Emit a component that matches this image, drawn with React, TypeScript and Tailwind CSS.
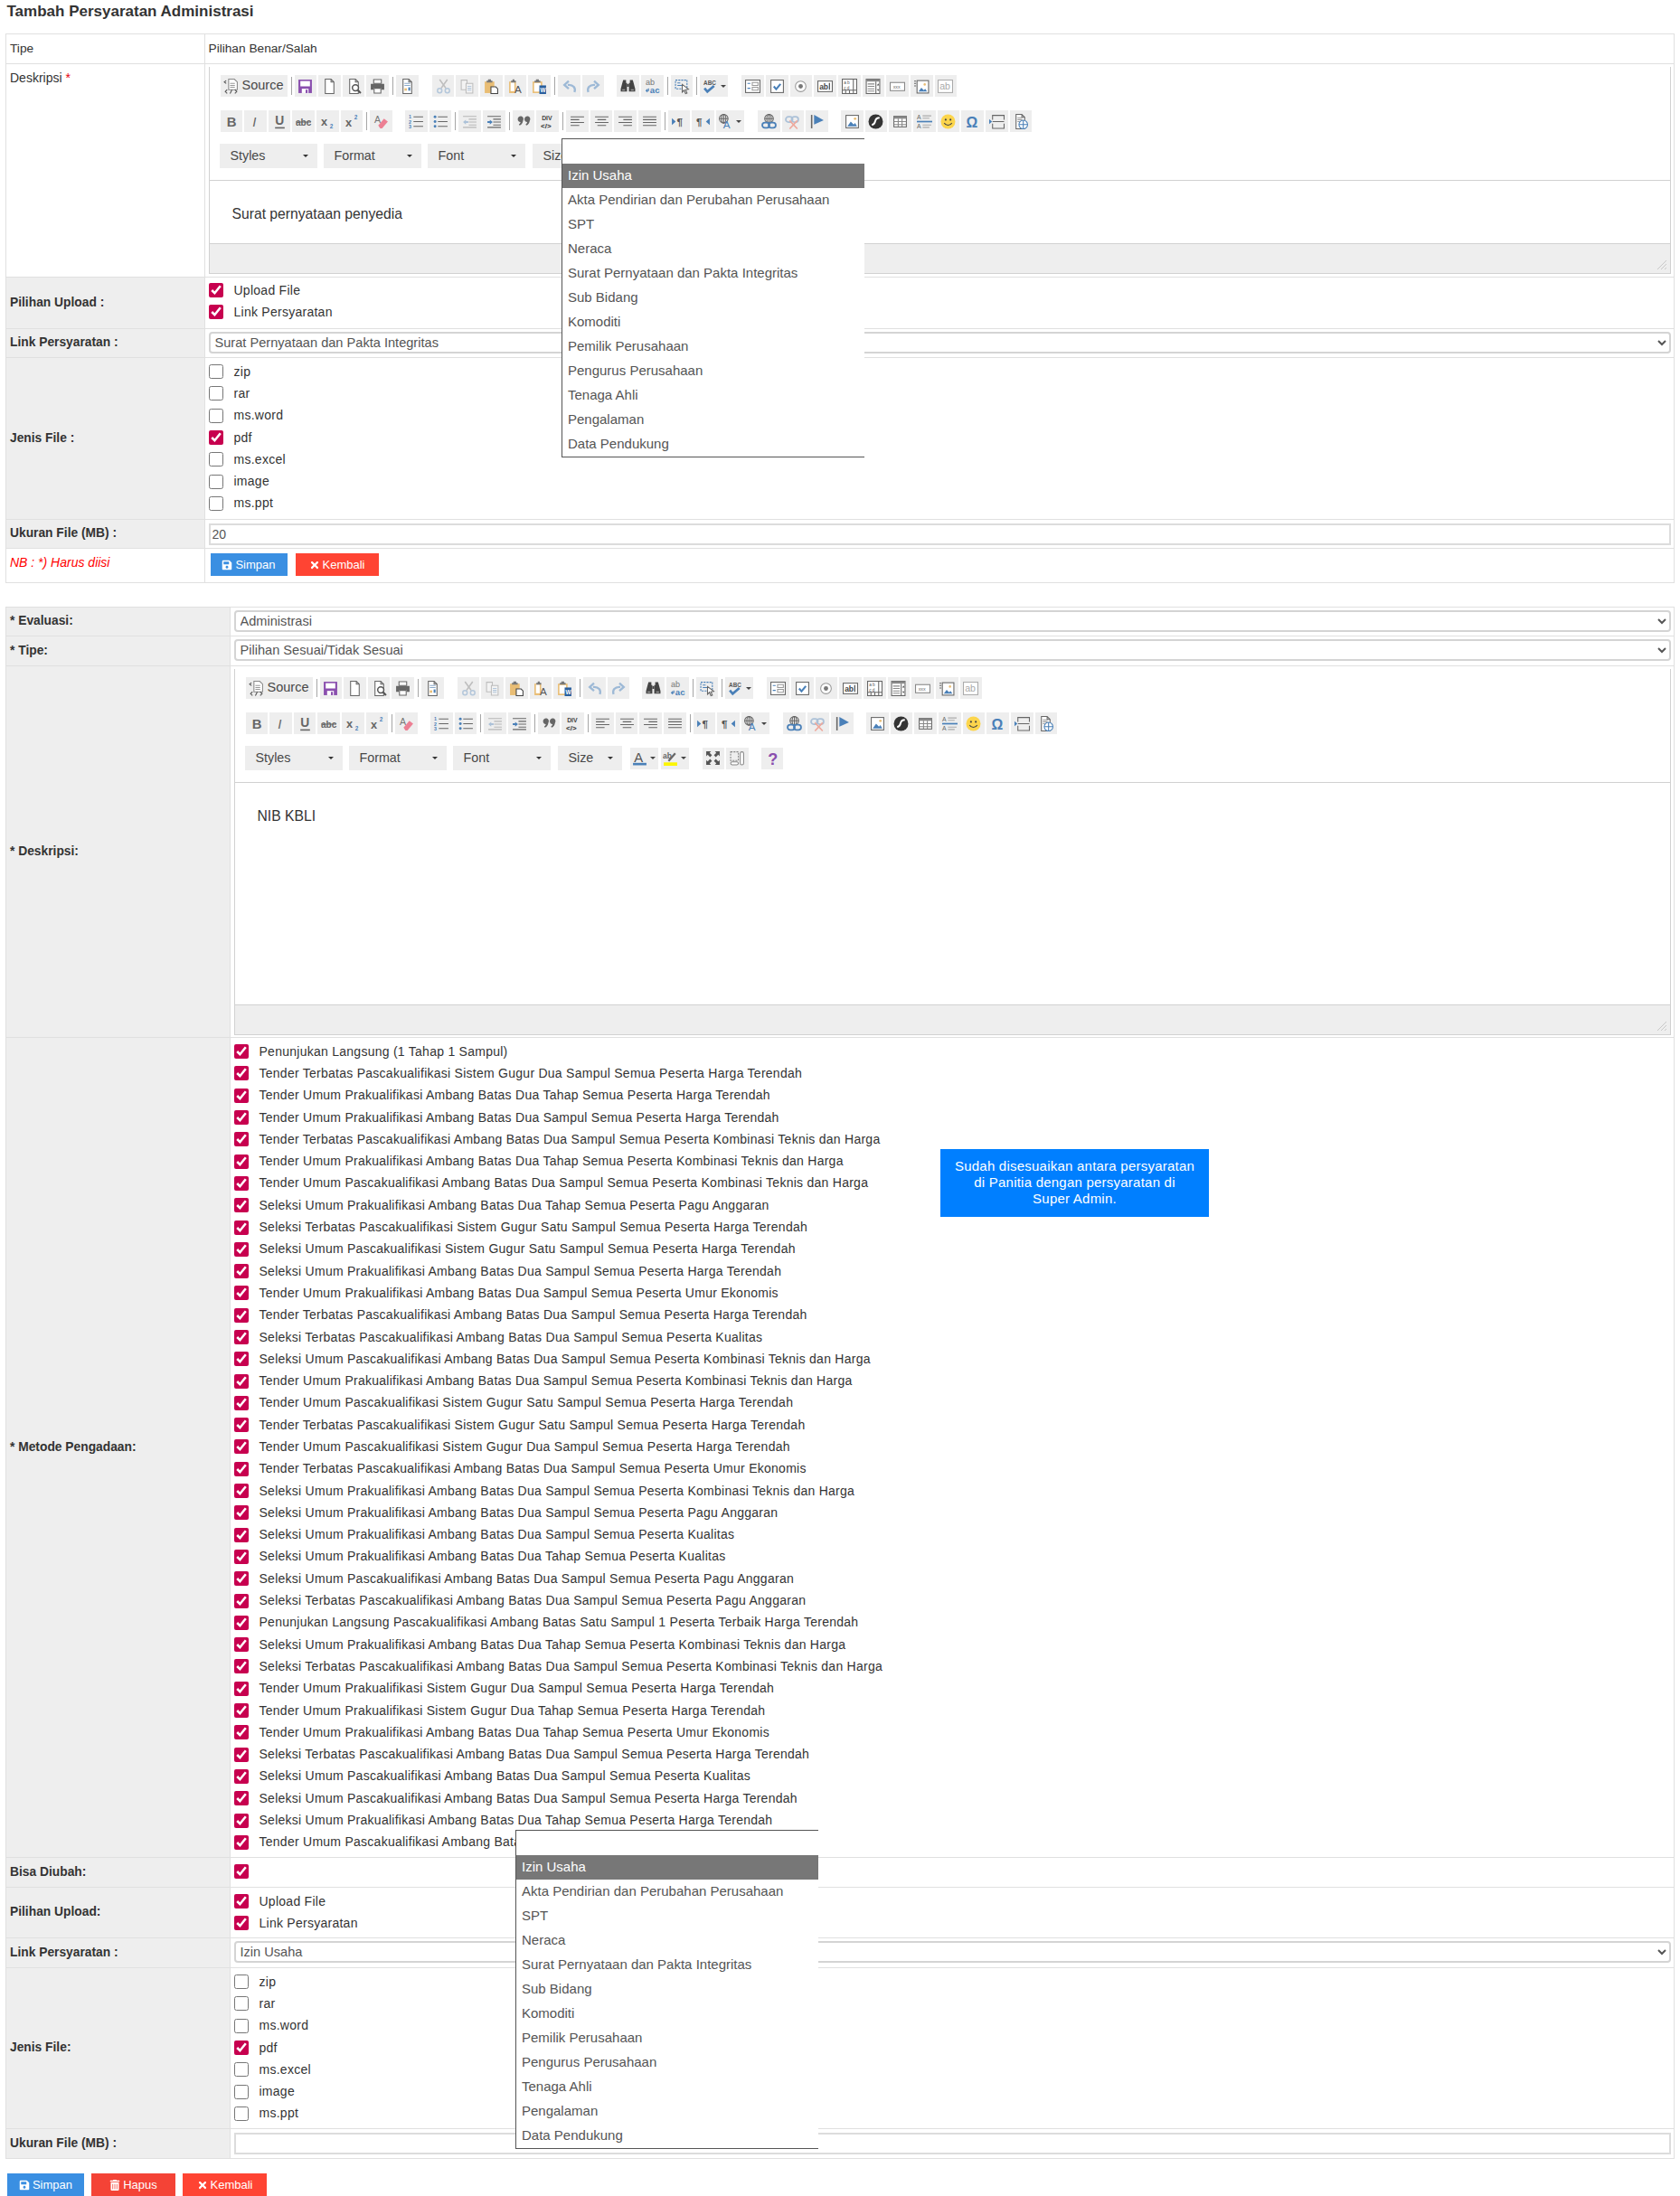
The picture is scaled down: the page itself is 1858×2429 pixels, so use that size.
import React from "react";
import { FaSave, FaTimes, FaTrashAlt } from "react-icons/fa";

const G = "#666";
const BL = "#4a80b8";
const TAN = "#e9bd74";
const FF = "Liberation Sans, Arial, sans-serif";

const T = ({ x, y, s, c = G, w = 400, i, children }: any) => (
  <text x={x} y={y} fontSize={s} fill={c} fontWeight={w} fontStyle={i ? "italic" : "normal"} fontFamily={FF}>
    {children}
  </text>
);
const L = ({ d, c = G, w = 1 }: any) => <path d={d} fill="none" stroke={c} strokeWidth={w} />;
const Doc = () => <path d="M3.5 .5h6l3 3v12h-9z M9.5 .5v3h3" fill="#fff" stroke={G} />;
const Clip = () => (
  <>
    <path d="M1 3h10v12H1z" fill={TAN} />
    <path d="M3 4h6v-2H7.5V.8h-3V2H3z" fill="#777" />
  </>
);
const Pic = () => (
  <>
    <rect x="1.5" y="1.5" width="13" height="13" fill="#fff" stroke={G} />
    <path d="M3 13l3.5-5 3 3 1.5-1.5 2 3.5z" fill={BL} />
    <circle cx="11" cy="5" r="1.3" fill={TAN} />
  </>
);
const Globe = ({ cx = 6, cy = 5, r = 4.5 }: any) => (
  <>
    <circle cx={cx} cy={cy} r={r} fill="none" stroke={G} />
    <L d={`M${cx - r} ${cy}h${2 * r}M${cx} ${cy - r}v${2 * r}`} />
    <ellipse cx={cx} cy={cy} rx={r / 2} ry={r} fill="none" stroke={G} />
  </>
);
const Chain = ({ c = BL }: any) => (
  <>
    <rect x="1" y="9" width="7.5" height="5.5" rx="2.7" fill="none" stroke={c} strokeWidth="1.7" />
    <rect x="7.5" y="9" width="7.5" height="5.5" rx="2.7" fill="none" stroke={c} strokeWidth="1.7" />
  </>
);
const lines = (rows: [number, number, number][], c = G) => (
  <L c={c} d={rows.map(([x, y, w]) => `M${x} ${y}h${w}`).join("")} />
);

const icons: Record<string, React.ReactNode> = {
  source: (
    <>
      <path d="M5.5 .5h6l3 3v8h-9z" fill="#fff" stroke="#888" />
      {lines([[7, 5, 5], [7, 7, 5], [7, 9, 5]], "#999")}
      <L d="M3 2 1 3.5 3 5M4 11.5 2 13.500l2 2M12 11.5l2 2-2 2M7 15.5l2-4" c="#555" />
    </>
  ),
  save: (
    <>
      <path d="M1 1h14v14H1z" fill="#8a4fae" />
      <path d="M3 2.5h10V8H3z" fill="#fff" />
      <path d="M4.5 10.5h7V15h-7z" fill="#fff" />
      <path d="M8.5 11.5h2V15h-2z" fill="#8a4fae" />
    </>
  ),
  newpage: <Doc />,
  preview: (
    <>
      <Doc />
      <circle cx="9.5" cy="9.5" r="3.2" fill="#fff" stroke="#555" strokeWidth="1.4" />
      <L d="M12 12l3 3" c="#555" w="2" />
    </>
  ),
  print: (
    <>
      <path d="M4 1h8v4H4z" fill="#fff" stroke={G} />
      <path d="M1 5.5h14v6h-3v-2H4v2H1z" fill="#666" />
      <path d="M4.5 10h7v5h-7z" fill="#fff" stroke={G} />
    </>
  ),
  templates: (
    <>
      <Doc />
      {lines([[5, 5, 6], [5, 7, 6]], "#8aa9c9")}
      <rect x="5" y="10" width="2.5" height="2.5" fill={TAN} />
      <rect x="9" y="9" width="2" height="3.5" fill={BL} />
    </>
  ),
  cut: (
    <g opacity=".35">
      <L d="M4 1l6.5 9M12 1 5.5 10" w="1.5" />
      <circle cx="4" cy="12.5" r="2.3" fill="none" stroke={BL} strokeWidth="1.4" />
      <circle cx="12" cy="12.5" r="2.3" fill="none" stroke={BL} strokeWidth="1.4" />
    </g>
  ),
  copy: (
    <g opacity=".35">
      <path d="M2 1.5h6v10H2z" fill="#fff" stroke={G} />
      <path d="M7 5h7v10H7z" fill="#fff" stroke={G} />
      {lines([[8.5, 8, 4], [8.5, 10, 4], [8.5, 12, 4]], BL)}
    </g>
  ),
  paste: (
    <>
      <Clip />
      <path d="M7.5 8.5h5l2 2v5h-7z" fill="#fff" stroke="#444" />
    </>
  ),
  pastetext: (
    <>
      <path d="M1 3h7v12H1z" fill={TAN} />
      <path d="M2.5 4h4v9h-4z" fill="#fff" />
      <path d="M3 4h5v-2H6.5V.8h-2V2H3z" fill="#777" />
      <T x="6.5" y="15.5" s="11" c="#555">A</T>
    </>
  ),
  pasteword: (
    <>
      <Clip />
      <path d="M2.5 4.5h7v9h-7z" fill="#fff" />
      <path d="M8 7h7v9H8z" fill="#2a5f9e" />
      <T x="9" y="14" s="6" c="#fff" w={700}>W</T>
    </>
  ),
  undo: <L c="#9db9d6" w="2.2" d="M13.5 14c1.5-4-1-8-7-7.5M7.5 2.5 3 6.5l4.5 4" />,
  redo: <L c="#9db9d6" w="2.2" d="M2.5 14c-1.500-4 1-8 7-7.5M8.5 2.5l4.5 4-4.5 4" />,
  find: (
    <>
      <path fill="#444" d="M3 1.500h3v3h1v9H.5v-3L2 5z" />
      <path fill="#444" d="M13 1.500h-3v3H9v9h6.500v-3L14 5z" />
      <path fill="#444" d="M7 5.500h2v3H7z" />
      <path fill="#999" d="M2 11h3v1.500H2zM11 11h3v1.500h-3z" />
    </>
  ),
  replace: (
    <>
      <T x="1" y="7" s="8.500" c="#777">ab</T>
      <T x="5.500" y="15" s="9" c={BL} w={700}>ac</T>
      <L d="M4 10v2.500H2M3 11 1.500 12.500 3 14" c={BL} />
    </>
  ),
  selectall: (
    <>
      <path d="M1 1.500h12v9H1z" fill="none" stroke={BL} strokeDasharray="2 1" />
      {lines([[3, 4.500, 3], [3, 7, 5]], BL)}
      <path d="M8 6l6.500 5-3 .5 1.500 3.500-1.500.5-1.500-3.500-2 2z" fill="#fff" stroke={G} />
    </>
  ),
  spell: (
    <>
      <T x="1" y="6.500" s="6" c="#555" w={700}>ABC</T>
      <L c={BL} w="2.500" d="M2 10l3 3.500L12 7.500" />
    </>
  ),
  form: (
    <>
      <rect x=".5" y="1.500" width="15" height="13" fill="#fff" stroke={G} />
      {lines([[2.500, 5, 3], [2.500, 10, 3]], BL)}
      <path d="M7.500 4h6v3h-6zM7.500 9h6v3h-6z" fill="none" stroke="#999" />
    </>
  ),
  checkbox: (
    <>
      <rect x="1.500" y="1.500" width="13" height="13" fill="#fff" stroke={G} />
      <L c={BL} w="2" d="M4.500 8l2.500 3 4.500-5.500" />
    </>
  ),
  radio: (
    <>
      <circle cx="8" cy="8" r="5.500" fill="#fff" stroke="#999" />
      <circle cx="8" cy="8" r="2.300" fill="#777" />
    </>
  ),
  textfield: (
    <>
      <rect x=".5" y="2.500" width="15" height="11" fill="#fff" stroke={G} />
      <T x="2" y="11" s="8" c="#444" w={700}>ab</T>
      <L d="M12.500 4.500v7" c="#333" />
    </>
  ),
  textarea: (
    <>
      <rect x=".5" y=".5" width="15" height="15" fill="#fff" stroke={G} />
      <T x="2" y="6" s="4.500" c="#555">a b</T>
      <T x="2" y="11" s="4.500" c="#555">c d</T>
      <L d="M.5 12h15M4 12v3.500M8 12v3.500M12 12v3.500M12 .5V12" />
    </>
  ),
  select: (
    <>
      <rect x="1" y=".5" width="14" height="15" fill="#fff" stroke={G} />
      <path d="M1 .5h14v2.500H1z" fill="#888" />
      <L d="M11 3v12.500" />
      {lines([[2.500, 5.500, 7], [2.500, 8, 7], [2.500, 10.500, 7], [2.500, 13, 7]], "#888")}
      <path d="M12 7l1.500-2 1 2zM12 11l1.500 2 1-2z" fill="#555" />
    </>
  ),
  button: (
    <>
      <rect x=".5" y="4" width="15" height="8.500" fill="#fff" stroke="#888" />
      <T x="3.500" y="10.300" s="5" c="#666">xxx</T>
    </>
  ),
  imagebutton: (
    <>
      <rect x="3" y="2" width="12" height="13" fill="#fff" stroke={G} />
      <path d="M4.500 13.500l3-4 2.500 2.500 1.500-1.500 2 3z" fill={BL} />
      <circle cx="11" cy="6" r="1.200" fill={TAN} />
      <L d="M0 2.500h2M0 5h2M0 7.500h2" />
    </>
  ),
  hidden: (
    <>
      <rect x=".5" y="1.500" width="15" height="13" fill="#fff" stroke="#aaa" />
      <T x="2" y="11.500" s="10" c="#aaa">ab</T>
    </>
  ),
  bold: <T x="3.500" y="13" s="14" c="#666" w={700}>B</T>,
  italic: <T x="5" y="13" s="14" c="#666" i>I</T>,
  underline: (
    <>
      <T x="3" y="11.500" s="13" c="#666" w={700}>U</T>
      <L d="M3 14.500h10" w="1.500" />
    </>
  ),
  strike: (
    <>
      <T x="0" y="12" s="9.500" c="#666" w={700}>abc</T>
      <L d="M0 8.500h16" />
    </>
  ),
  sub: (
    <>
      <T x="1" y="12" s="12" c="#666" w={700}>x</T>
      <T x="10" y="15" s="6" c={BL} w={700}>2</T>
    </>
  ),
  sup: (
    <>
      <T x="1" y="13" s="12" c="#666" w={700}>x</T>
      <T x="10" y="6" s="6" c={BL} w={700}>2</T>
    </>
  ),
  eraser: (
    <>
      <T x="1" y="9" s="10" c="#777">A</T>
      <path d="M5 12l6-7 4 3-6 7H7z" fill="#ec7f93" />
    </>
  ),
  ol: (
    <>
      <T x="0" y="5" s="5" c={BL} w={700}>1</T>
      <T x="0" y="10" s="5" c={BL} w={700}>2</T>
      <T x="0" y="15" s="5" c={BL} w={700}>3</T>
      {lines([[5, 3, 10], [5, 8, 10], [5, 13, 10]])}
    </>
  ),
  ul: (
    <>
      <circle cx="2" cy="3" r="1.400" fill={BL} />
      <circle cx="2" cy="8" r="1.400" fill={BL} />
      <circle cx="2" cy="13" r="1.400" fill={BL} />
      {lines([[5, 3, 10], [5, 8, 10], [5, 13, 10]])}
    </>
  ),
  outdent: (
    <g opacity=".4">
      {lines([[1, 2.500, 14], [7, 5.500, 8], [7, 8.500, 8], [7, 11.500, 8], [1, 14, 14]])}
      <path d="M1 8.500 4 6v1.500h2.500v2H4V11z" fill={BL} />
    </g>
  ),
  indent: (
    <>
      {lines([[1, 2.500, 14], [7, 5.500, 8], [7, 8.500, 8], [7, 11.500, 8], [1, 14, 14]])}
      <path d="M6.500 8.500 3.500 6v1.500H1v2h2.500V11z" fill={BL} />
    </>
  ),
  quote: (
    <>
      <path d="M1.500 5.500a3 3 0 1 1 5.500 1.500c-.3 2.500-1.500 4-3.500 5l-.8-1c1-.7 1.500-1.500 1.700-2.500a3 3 0 0 1-2.900-3z" fill="#666" />
      <path d="M8.500 5.500a3 3 0 1 1 5.500 1.500c-.3 2.500-1.500 4-3.500 5l-.8-1c1-.7 1.500-1.500 1.700-2.500a3 3 0 0 1-2.900-3z" fill="#666" />
    </>
  ),
  div: (
    <>
      <T x="2" y="7" s="6.500" c="#444" w={700}>DIV</T>
      <T x="1" y="15" s="7.500" c="#333" w={700}>&lt;/&gt;</T>
    </>
  ),
  left: lines([[1, 3, 14], [1, 6, 9], [1, 9, 14], [1, 12, 9]]),
  center: lines([[1, 3, 14], [3.500, 6, 9], [1, 9, 14], [3.500, 12, 9]]),
  right: lines([[1, 3, 14], [6, 6, 9], [1, 9, 14], [6, 12, 9]]),
  justify: lines([[1, 3, 14], [1, 6, 14], [1, 9, 14], [1, 12, 14]]),
  ltr: (
    <>
      <path d="M1 4.500 5 8l-4 3.500z" fill={BL} />
      <T x="6" y="12.500" s="11" c="#555" w={700}>¶</T>
    </>
  ),
  rtl: (
    <>
      <T x="1" y="12.500" s="11" c="#555" w={700}>¶</T>
      <path d="M15 4.500 11 8l4 3.500z" fill={BL} />
    </>
  ),
  lang: (
    <>
      <Globe />
      <T x="5.500" y="15.500" s="11" c={BL}>A</T>
    </>
  ),
  link: (
    <>
      <Globe cx={8} cy={5} r={4.500} />
      <Chain />
    </>
  ),
  unlink: (
    <>
      <g opacity=".4">
        <rect x="1" y="3" width="7" height="5.500" rx="2.700" fill="none" stroke={BL} strokeWidth="1.700" />
        <rect x="7" y="3" width="7" height="5.500" rx="2.700" fill="none" stroke={BL} strokeWidth="1.700" />
      </g>
      <L c="#eea99d" w="1.600" d="M5 7l8 8.500M13 7l-8 8.500" />
    </>
  ),
  anchor: (
    <>
      <L d="M2.500 1v14" w="1.500" />
      <path d="M5 1l10 5.500L5 11z" fill={BL} />
    </>
  ),
  image: <Pic />,
  flash: (
    <>
      <circle cx="8" cy="8" r="7.500" fill="#333" />
      <path d="M12 4c-3 0-4 1-4.500 3.500C7 10.500 6 11 4 11.500" fill="none" stroke="#fff" strokeWidth="1.800" />
    </>
  ),
  table: (
    <>
      <rect x="1.500" y="2.500" width="13" height="11" fill="#fff" stroke={G} />
      <path d="M1.500 2.500h13v2.500h-13z" fill="#888" />
      <L d="M1.500 8h13M1.500 11h13M6 5v8.500M10 5v8.500" c="#888" />
    </>
  ),
  hr: (
    <>
      <T x="0" y="6" s="6.500" c="#666">A</T>
      <T x="0" y="15" s="6.500" c="#666">A</T>
      {lines([[6, 2, 9], [6, 4.500, 7], [6, 11.500, 9], [6, 14, 7]], "#aaa")}
      <L d="M0 8h16" c={BL} w="1.600" />
    </>
  ),
  smiley: (
    <>
      <circle cx="8" cy="8" r="7.500" fill="#fcd54c" />
      <circle cx="5.500" cy="6" r="1" fill="#444" />
      <circle cx="10.500" cy="6" r="1" fill="#444" />
      <L d="M4 9.500c1.500 3 6.500 3 8 0" c="#444" />
    </>
  ),
  omega: <T x="1.500" y="14" s="15" c={BL} w={700}>Ω</T>,
  pagebreak: (
    <>
      <L d="M3.500 6V1.500h12V6M3.500 10v5h12v-5M3.500 8h12" />
      <path d="M0 8V5.500L3 8l-3 2.500z" fill={BL} />
    </>
  ),
  iframe: (
    <>
      <Doc />
      {lines([[5, 4, 5], [5, 6, 5], [5, 8, 3]], "#999")}
      <circle cx="11" cy="11" r="4.500" fill="#fff" stroke={BL} />
      <L c={BL} d="M6.500 11h9M11 6.500v9" />
    </>
  ),
  textcolor: (
    <>
      <T x="2" y="12" s="14" c="#555">A</T>
      <path d="M1 13h14v2.500H1z" fill={BL} />
    </>
  ),
  bgcolor: (
    <>
      <T x="0" y="8" s="8" c="#666" w={700}>ab</T>
      <L d="M6 11l7-8" w="2" />
      <path d="M1 12.500h14V16H1z" fill="#fcf600" />
    </>
  ),
  maximize: (
    <path
      fill="#555"
      d="M1 1h5L4.500 2.500 7 5 5 7 2.500 4.500 1 6zM15 1v5l-1.500-1.500L11 7 9 5l2.500-2.500L10 1zM1 15v-5l1.500 1.500L5 9l2 2-2.500 2.500L6 15zM15 15h-5l1.500-1.500L9 11l2-2 2.500 2.500L15 10z"
    />
  ),
  showblocks: (
    <>
      <path d="M1 1.500h8v9H1z" fill="none" stroke="#888" strokeDasharray="2 1" />
      <rect x="1" y="12" width="8" height="3" rx="1.500" fill="#fff" stroke="#888" />
      <rect x="11" y="1.500" width="3.500" height="13.500" rx="1.700" fill="#fff" stroke="#888" />
    </>
  ),
  about: <T x="3" y="15" s="17" c="#8a4fae" w={700}>?</T>,
};

const Ic = ({ n }: { n: string }) => (
  <svg viewBox="0 0 16 16" className="w-[17px] h-[17px] shrink-0 overflow-visible">
    {icons[n]}
  </svg>
);

const Btn = ({ n, ml = "" }: { n: string; ml?: string }) => (
  <div className={`h-6 w-[24.67px] mr-[2px] shrink-0 bg-[#eeeeee] flex items-center justify-center ${ml}`}>
    <Ic n={n} />
  </div>
);
const Arrow = () => <span className="border-x-[3px] border-x-transparent border-t-[3px] border-t-[#444] ml-[3px]" />;
const WideBtn = ({ n, ml = "" }: { n: string; ml?: string }) => (
  <div className={`h-6 w-[31px] mr-[2px] shrink-0 bg-[#eeeeee] flex items-center justify-center ${ml}`}>
    <Ic n={n} />
    <Arrow />
  </div>
);
const Sep = () => <div className="h-[20px] w-px bg-[#a6a6a6] ml-[2px] mr-[3px] shrink-0" />;
const Combo = ({ t, w, mr }: { t: string; w: string; mr: string }) => (
  <div className={`h-[27px] ${w} ${mr} bg-[#eeeeee] flex items-center justify-between pl-[12px] pr-[10px] text-[14.300px] text-[#484848] shrink-0`}>
    <span>{t}</span>
    <span className="border-x-[3px] border-x-transparent border-t-[3px] border-t-[#333]" />
  </div>
);

const Toolbar = () => (
  <div className="pl-[12px] pb-[13px] border-b border-[#d1d1d1] flex flex-col">
    <div className="flex items-center h-6">
      <div className="h-6 w-[74px] mr-[2px] shrink-0 bg-[#eeeeee] flex items-center pl-[3px] text-[14.500px] text-[#484848]">
        <Ic n="source" />
        <span className="ml-[4px]">Source</span>
      </div>
      <Sep />
      <Btn n="save" />
      <Btn n="newpage" />
      <Btn n="preview" />
      <Btn n="print" />
      <Sep />
      <Btn n="templates" />
      <Btn n="cut" ml="ml-[13px]" />
      <Btn n="copy" />
      <Btn n="paste" />
      <Btn n="pastetext" />
      <Btn n="pasteword" />
      <Sep />
      <Btn n="undo" />
      <Btn n="redo" />
      <Btn n="find" ml="ml-[12px]" />
      <Btn n="replace" />
      <Sep />
      <Btn n="selectall" />
      <Sep />
      <WideBtn n="spell" />
      <Btn n="form" ml="ml-[13px]" />
      <Btn n="checkbox" />
      <Btn n="radio" />
      <Btn n="textfield" />
      <Btn n="textarea" />
      <Btn n="select" />
      <Btn n="button" />
      <Btn n="imagebutton" />
      <Btn n="hidden" />
    </div>
    <div className="flex items-center h-6 mt-[15px]">
      <Btn n="bold" />
      <Btn n="italic" />
      <Btn n="underline" />
      <Btn n="strike" />
      <Btn n="sub" />
      <Btn n="sup" />
      <Sep />
      <Btn n="eraser" />
      <Btn n="ol" ml="ml-[12px]" />
      <Btn n="ul" />
      <Sep />
      <Btn n="outdent" />
      <Btn n="indent" />
      <Sep />
      <Btn n="quote" />
      <Btn n="div" />
      <Sep />
      <Btn n="left" />
      <Btn n="center" />
      <Btn n="right" />
      <Btn n="justify" />
      <Sep />
      <Btn n="ltr" />
      <Btn n="rtl" />
      <WideBtn n="lang" />
      <Btn n="link" ml="ml-[13px]" />
      <Btn n="unlink" />
      <Btn n="anchor" />
      <Btn n="image" ml="ml-[12px]" />
      <Btn n="flash" />
      <Btn n="table" />
      <Btn n="hr" />
      <Btn n="smiley" />
      <Btn n="omega" />
      <Btn n="pagebreak" />
      <Btn n="iframe" />
    </div>
    <div className="flex items-center h-[27px] mt-[13px] -ml-px">
      <Combo t="Styles" w="w-[108px]" mr="mr-[7px]" />
      <Combo t="Format" w="w-[108px]" mr="mr-[7px]" />
      <Combo t="Font" w="w-[108px]" mr="mr-[8px]" />
      <Combo t="Size" w="w-[71px]" mr="mr-[9px]" />
      <WideBtn n="textcolor" />
      <WideBtn n="bgcolor" ml="ml-px" />
      <Btn n="maximize" ml="ml-[13px]" />
      <Btn n="showblocks" />
      <Btn n="about" ml="ml-[12px]" />
    </div>
  </div>
);

const Editor = ({ text, h }: { text: string; h: string }) => (
  <div className="border-x border-b border-[#d1d1d1] pt-[9px]">
    <Toolbar />
    <div className={`${h} pl-[25px] pt-[28px] text-[15.700px] leading-[18px] text-[#333]`}>{text}</div>
    <div className="relative h-[33px] bg-[#eeeeee] border-t border-[#d1d1d1]">
      <svg viewBox="0 0 12 12" className="absolute right-[3px] bottom-[3px] w-3 h-3">
        <path d="M1 11 11 1M5 11l6-6M9 11l2-2" stroke="#c8c8c8" fill="none" />
      </svg>
    </div>
  </div>
);

const Chk = ({ on }: { on?: boolean }) => (
  <input type="checkbox" defaultChecked={!!on} className="w-[16px] h-[16px] m-0 shrink-0 accent-[#c7004f]" />
);
const CheckRow = ({ t, on }: { t: string; on?: boolean }) => (
  <label className="flex items-center h-[24.300px]">
    <Chk on={on} />
    <span className="ml-[12px] whitespace-nowrap tracking-[0.260px]">{t}</span>
  </label>
);

const labelCls = "border border-[#e0e0e0] bg-[#eeeeee] pl-[4.500px] pr-1 font-bold text-[13.800px] align-middle text-left";
const cellCls = "border border-[#e0e0e0] pl-[4px] pr-[3px] align-top";

const Field = ({ v }: { v: string }) => (
  <select
    defaultValue={v}
    className="block w-full h-[24px] border-2 border-[#d4d4d4] rounded-[4px] bg-white pl-[1px] text-[14.600px] text-[#555] mt-[3px]"
  >
    <option>{v}</option>
  </select>
);
const TextBox = ({ v }: { v?: string }) => (
  <input
    readOnly
    value={v ?? ""}
    className="block w-full h-[24px] border-2 border-[#dcdcdc] bg-white pl-[2px] text-[14px] text-[#555] mt-[4px] outline-none"
  />
);
const ActionBtn = ({ kind, t, w, bg }: { kind: "save" | "x" | "trash"; t: string; w: string; bg: string }) => (
  <div className={`${w} ${bg} h-[25px] flex items-center justify-center gap-[3px] text-white text-[13px] shrink-0`}>
    {kind === "save" ? <FaSave size={12} /> : kind === "x" ? <FaTimes size={12} /> : <FaTrashAlt size={12} />}
    <span>{t}</span>
  </div>
);

const options = [
  "Izin Usaha",
  "Akta Pendirian dan Perubahan Perusahaan",
  "SPT",
  "Neraca",
  "Surat Pernyataan dan Pakta Integritas",
  "Sub Bidang",
  "Komoditi",
  "Pemilik Perusahaan",
  "Pengurus Perusahaan",
  "Tenaga Ahli",
  "Pengalaman",
  "Data Pendukung",
];

const Dropdown = ({ pos }: { pos: string }) => (
  <div className={`absolute ${pos} w-[335px] bg-white border-l border-y border-[#555] text-[15px] text-[#555]`}>
    <div className="h-[27px]" />
    {options.map((o, i) => (
      <div key={o} className={`h-[27px] pl-[6px] flex items-center ${i === 0 ? "bg-[#777777] text-white" : ""}`}>
        {o}
      </div>
    ))}
  </div>
);

const methods = [
  "Penunjukan Langsung (1 Tahap 1 Sampul)",
  "Tender Terbatas Pascakualifikasi Sistem Gugur Dua Sampul Semua Peserta Harga Terendah",
  "Tender Umum Prakualifikasi Ambang Batas Dua Tahap Semua Peserta Harga Terendah",
  "Tender Umum Prakualifikasi Ambang Batas Dua Sampul Semua Peserta Harga Terendah",
  "Tender Terbatas Pascakualifikasi Ambang Batas Dua Sampul Semua Peserta Kombinasi Teknis dan Harga",
  "Tender Umum Prakualifikasi Ambang Batas Dua Tahap Semua Peserta Kombinasi Teknis dan Harga",
  "Tender Umum Pascakualifikasi Ambang Batas Dua Sampul Semua Peserta Kombinasi Teknis dan Harga",
  "Seleksi Umum Prakualifikasi Ambang Batas Dua Tahap Semua Peserta Pagu Anggaran",
  "Seleksi Terbatas Pascakualifikasi Sistem Gugur Satu Sampul Semua Peserta Harga Terendah",
  "Seleksi Umum Pascakualifikasi Sistem Gugur Satu Sampul Semua Peserta Harga Terendah",
  "Seleksi Umum Prakualifikasi Ambang Batas Dua Sampul Semua Peserta Harga Terendah",
  "Tender Umum Prakualifikasi Ambang Batas Dua Sampul Semua Peserta Umur Ekonomis",
  "Tender Terbatas Pascakualifikasi Ambang Batas Dua Sampul Semua Peserta Harga Terendah",
  "Seleksi Terbatas Pascakualifikasi Ambang Batas Dua Sampul Semua Peserta Kualitas",
  "Seleksi Umum Pascakualifikasi Ambang Batas Dua Sampul Semua Peserta Kombinasi Teknis dan Harga",
  "Tender Umum Prakualifikasi Ambang Batas Dua Sampul Semua Peserta Kombinasi Teknis dan Harga",
  "Tender Umum Pascakualifikasi Sistem Gugur Satu Sampul Semua Peserta Harga Terendah",
  "Tender Terbatas Pascakualifikasi Sistem Gugur Satu Sampul Semua Peserta Harga Terendah",
  "Tender Umum Pascakualifikasi Sistem Gugur Dua Sampul Semua Peserta Harga Terendah",
  "Tender Terbatas Pascakualifikasi Ambang Batas Dua Sampul Semua Peserta Umur Ekonomis",
  "Seleksi Umum Prakualifikasi Ambang Batas Dua Sampul Semua Peserta Kombinasi Teknis dan Harga",
  "Seleksi Umum Prakualifikasi Ambang Batas Dua Sampul Semua Peserta Pagu Anggaran",
  "Seleksi Umum Prakualifikasi Ambang Batas Dua Sampul Semua Peserta Kualitas",
  "Seleksi Umum Prakualifikasi Ambang Batas Dua Tahap Semua Peserta Kualitas",
  "Seleksi Umum Pascakualifikasi Ambang Batas Dua Sampul Semua Peserta Pagu Anggaran",
  "Seleksi Terbatas Pascakualifikasi Ambang Batas Dua Sampul Semua Peserta Pagu Anggaran",
  "Penunjukan Langsung Pascakualifikasi Ambang Batas Satu Sampul 1 Peserta Terbaik Harga Terendah",
  "Seleksi Umum Prakualifikasi Ambang Batas Dua Tahap Semua Peserta Kombinasi Teknis dan Harga",
  "Seleksi Terbatas Pascakualifikasi Ambang Batas Dua Sampul Semua Peserta Kombinasi Teknis dan Harga",
  "Tender Umum Prakualifikasi Sistem Gugur Dua Sampul Semua Peserta Harga Terendah",
  "Tender Umum Prakualifikasi Sistem Gugur Dua Tahap Semua Peserta Harga Terendah",
  "Tender Umum Prakualifikasi Ambang Batas Dua Tahap Semua Peserta Umur Ekonomis",
  "Seleksi Terbatas Pascakualifikasi Ambang Batas Dua Sampul Semua Peserta Harga Terendah",
  "Seleksi Umum Pascakualifikasi Ambang Batas Dua Sampul Semua Peserta Kualitas",
  "Seleksi Umum Pascakualifikasi Ambang Batas Dua Sampul Semua Peserta Harga Terendah",
  "Seleksi Umum Prakualifikasi Ambang Batas Dua Tahap Semua Peserta Harga Terendah",
  "Tender Umum Pascakualifikasi Ambang Batas Dua Sampul Semua Peserta Harga Terendah",
];

const fileTypes: [string, boolean][] = [
  ["zip", false],
  ["rar", false],
  ["ms.word", false],
  ["pdf", true],
  ["ms.excel", false],
  ["image", false],
  ["ms.ppt", false],
];

export default function App() {
  return (
    <div className="relative w-[1858px] h-[2429px] bg-white px-[5.500px] text-[14px] text-[#333] font-['Liberation_Sans',Arial,sans-serif]">
      <h1 className="h-[37px] pl-[2px] pt-[3px] text-[17px] leading-[20px] font-bold text-[#333]">
        Tambah Persyaratan Administrasi
      </h1>

      <table className="w-[1846px] table-fixed border-collapse">
        <colgroup>
          <col className="w-[220px]" />
          <col />
        </colgroup>
        <tbody>
          <tr className="h-[33px]">
            <td className="border border-[#e0e0e0] pl-[4.500px] align-middle text-[13.700px]">Tipe</td>
            <td className="border border-[#e0e0e0] pl-[4px] align-middle text-[13.700px]">Pilihan Benar/Salah</td>
          </tr>
          <tr className="h-[236px]">
            <td className="border border-[#e0e0e0] pl-[4.500px] pt-[5px] align-top">
              Deskripsi <span className="text-red-600">*</span>
            </td>
            <td className={`${cellCls} pt-[3px]`}>
              <Editor text="Surat pernyataan penyedia" h="h-[69px]" />
            </td>
          </tr>
          <tr className="h-[57px]">
            <th className={labelCls}>Pilihan Upload :</th>
            <td className={`${cellCls} pt-[2px]`}>
              <CheckRow t="Upload File" on />
              <CheckRow t="Link Persyaratan" on />
            </td>
          </tr>
          <tr className="h-[32px]">
            <th className={labelCls}>Link Persyaratan :</th>
            <td className={cellCls}>
              <Field v="Surat Pernyataan dan Pakta Integritas" />
            </td>
          </tr>
          <tr className="h-[179px]">
            <th className={labelCls}>Jenis File :</th>
            <td className={`${cellCls} pt-[3px]`}>
              {fileTypes.map(([t, on]) => (
                <CheckRow key={t} t={t} on={on} />
              ))}
            </td>
          </tr>
          <tr className="h-[32px]">
            <th className={labelCls}>Ukuran File (MB) :</th>
            <td className={cellCls}>
              <TextBox v="20" />
            </td>
          </tr>
          <tr className="h-[38px]">
            <td className="border border-[#e0e0e0] pl-[4.500px] pt-[5px] align-top italic text-[#f00]">NB : *) Harus diisi</td>
            <td className={`${cellCls} pt-[5px] pl-[6px]`}>
              <div className="flex gap-[9px]">
                <ActionBtn kind="save" t="Simpan" w="w-[85px]" bg="bg-[#3a8fe2]" />
                <ActionBtn kind="x" t="Kembali" w="w-[92px]" bg="bg-[#ff4433]" />
              </div>
            </td>
          </tr>
        </tbody>
      </table>

      <table className="w-[1846px] table-fixed border-collapse mt-[26px]">
        <colgroup>
          <col className="w-[248px]" />
          <col />
        </colgroup>
        <tbody>
          <tr className="h-[32px]">
            <th className={labelCls}>* Evaluasi:</th>
            <td className={cellCls}>
              <Field v="Administrasi" />
            </td>
          </tr>
          <tr className="h-[33px]">
            <th className={labelCls}>* Tipe:</th>
            <td className={cellCls}>
              <Field v="Pilihan Sesuai/Tidak Sesuai" />
            </td>
          </tr>
          <tr className="h-[411px]">
            <th className={labelCls}>* Deskripsi:</th>
            <td className={`${cellCls} pt-[3px]`}>
              <Editor text="NIB KBLI" h="h-[245px]" />
            </td>
          </tr>
          <tr className="h-[907px]">
            <th className={labelCls}>* Metode Pengadaan:</th>
            <td className={`${cellCls} pt-[3px]`}>
              {methods.map((m, i) => (
                <CheckRow key={i} t={m} on />
              ))}
            </td>
          </tr>
          <tr className="h-[33px]">
            <th className={labelCls}>Bisa Diubah:</th>
            <td className={`${cellCls} pt-[3px]`}>
              <label className="flex items-center h-[24.300px]">
                <Chk on />
              </label>
            </td>
          </tr>
          <tr className="h-[56px]">
            <th className={labelCls}>Pilihan Upload:</th>
            <td className={`${cellCls} pt-[3px]`}>
              <CheckRow t="Upload File" on />
              <CheckRow t="Link Persyaratan" on />
            </td>
          </tr>
          <tr className="h-[33px]">
            <th className={labelCls}>Link Persyaratan :</th>
            <td className={cellCls}>
              <Field v="Izin Usaha" />
            </td>
          </tr>
          <tr className="h-[178px]">
            <th className={labelCls}>Jenis File:</th>
            <td className={`${cellCls} pt-[3px]`}>
              {fileTypes.map(([t, on]) => (
                <CheckRow key={t} t={t} on={on} />
              ))}
            </td>
          </tr>
          <tr className="h-[33px]">
            <th className={labelCls}>Ukuran File (MB) :</th>
            <td className={cellCls}>
              <TextBox />
            </td>
          </tr>
        </tbody>
      </table>

      <div className="flex gap-[8px] mt-[16px] pl-[2.500px]">
        <ActionBtn kind="save" t="Simpan" w="w-[85px]" bg="bg-[#3a8fe2]" />
        <ActionBtn kind="trash" t="Hapus" w="w-[93px]" bg="bg-[#f44336]" />
        <ActionBtn kind="x" t="Kembali" w="w-[93px]" bg="bg-[#ff4433]" />
      </div>

      <Dropdown pos="left-[621px] top-[153px]" />
      <Dropdown pos="left-[570px] top-[2024px]" />

      <div className="absolute left-[1040px] top-[1271px] w-[297px] h-[75px] bg-[#007fff] text-white text-center text-[15px] leading-[18px] tracking-[0.230px] pt-[10px]">
        Sudah disesuaikan antara persyaratan
        <br />
        di Panitia dengan persyaratan di
        <br />
        Super Admin.
      </div>
    </div>
  );
}
